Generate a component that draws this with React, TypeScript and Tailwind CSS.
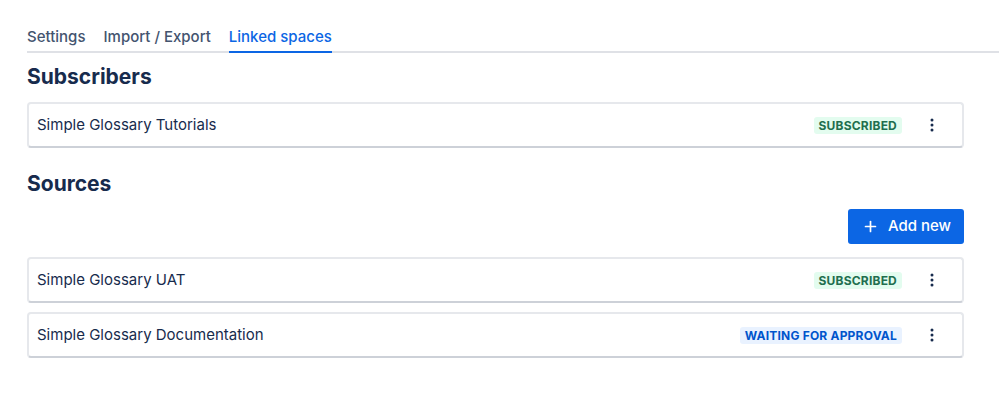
import { Plus } from 'lucide-react';

type Status = 'subscribed' | 'waiting';

type LinkedSpace = {
  name: string;
  status: Status;
};

const subscribers: LinkedSpace[] = [{ name: 'Simple Glossary Tutorials', status: 'subscribed' }];

const sources: LinkedSpace[] = [
  { name: 'Simple Glossary UAT', status: 'subscribed' },
  { name: 'Simple Glossary Documentation', status: 'waiting' },
];

const tabs = ['Settings', 'Import / Export', 'Linked spaces'];

function StatusLozenge({ status }: { status: Status }) {
  if (status === 'waiting') {
    return (
      <span className="h-[17px] px-[5px] rounded-[3px] bg-[#E9F2FF] text-[#0055CC] text-[12px] leading-[17px] font-bold tracking-[0.2px]">
        WAITING FOR APPROVAL
      </span>
    );
  }
  return (
    <span className="h-[17px] px-[5px] rounded-[3px] bg-[#E3FCEF] text-[#216E4E] text-[12px] leading-[17px] font-bold tracking-[0.2px]">
      SUBSCRIBED
    </span>
  );
}

function MoreIcon() {
  return (
    <svg width="16" height="16" viewBox="0 0 16 16" fill="#172B4D">
      <circle cx="8" cy="3" r="1.5" />
      <circle cx="8" cy="8" r="1.5" />
      <circle cx="8" cy="13" r="1.5" />
    </svg>
  );
}

function SpaceRow({ space }: { space: LinkedSpace }) {
  return (
    <div className="h-[46px] flex items-center pl-[8px] pr-[14px] bg-white rounded-[4px] border-2 border-[#E6E8EC] border-b-[#CDD1D8]">
      <span className="flex-1 text-[15px] text-[#172B4D]">{space.name}</span>
      <StatusLozenge status={space.status} />
      <button className="ml-[14px] w-[32px] h-[32px] flex items-center justify-center rounded-[3px]">
        <MoreIcon />
      </button>
    </div>
  );
}

export default function App() {
  return (
    <div className="w-[999px] h-[410px] bg-white pt-[27px] pl-[27px] font-['Inter','Liberation_Sans',sans-serif] overflow-hidden">
      {/* Tabs */}
      <div className="flex gap-[18px] border-b-2 border-[#DFE1E6]">
        {tabs.map(tab => {
          const active = tab === 'Linked spaces';
          return (
            <div
              key={tab}
              className={
                active
                  ? 'relative pb-[4px] text-[15px] leading-[20px] font-medium text-[#0C66E4]'
                  : 'relative pb-[4px] text-[15px] leading-[20px] font-medium text-[#44546F]'
              }
            >
              {tab}
              {active && <div className="absolute left-0 right-0 -bottom-[2px] h-[2px] bg-[#0C66E4]" />}
            </div>
          );
        })}
      </div>

      <div className="pr-[35px]">
        {/* Subscribers */}
        <h2 className="mt-[12px] text-[21px] leading-[24px] font-bold text-[#172B4D]">Subscribers</h2>
        <div className="mt-[13px] flex flex-col gap-[9px]">
          {subscribers.map(s => (
            <SpaceRow key={s.name} space={s} />
          ))}
        </div>

        {/* Sources */}
        <h2 className="mt-[24px] text-[21px] leading-[24px] font-bold text-[#172B4D]">Sources</h2>
        <div className="mt-[13px] flex justify-end">
          <button className="h-[35px] pl-[14px] pr-[13px] flex items-center gap-[9px] rounded-[3px] bg-[#0C66E4] text-white text-[15px] font-medium">
            <Plus className="w-[17px] h-[17px]" strokeWidth={2.4} />
            Add new
          </button>
        </div>
        <div className="mt-[13px] flex flex-col gap-[9px]">
          {sources.map(s => (
            <SpaceRow key={s.name} space={s} />
          ))}
        </div>
      </div>
    </div>
  );
}
